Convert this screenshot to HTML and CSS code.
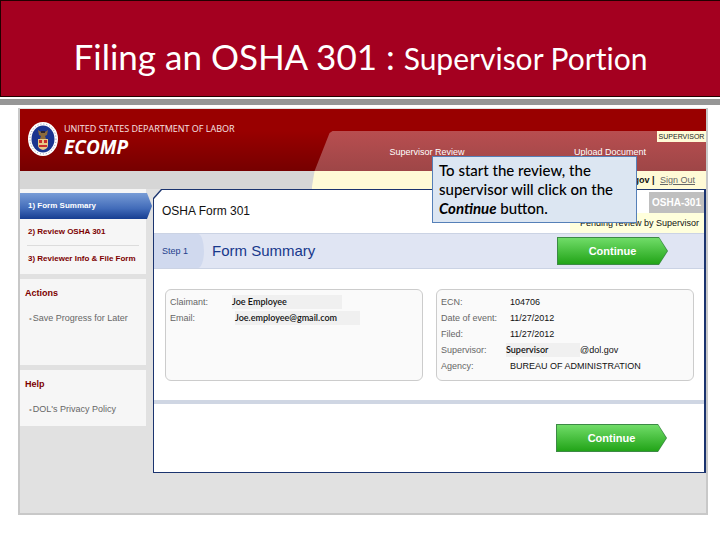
FILE: index.html
```
<!DOCTYPE html>
<html lang="en">
<head>
<meta charset="utf-8">
<title>Filing an OSHA 301: Supervisor Portion</title>
<link rel="stylesheet" href="styles.css">
</head>
<body>
<header class="banner">
  <h1>Filing an OSHA 301 : <small>Supervisor Portion</small></h1>
</header>
<main class="app">
  <div class="top">
    <div class="brand">
      <svg class="seal" viewBox="0 0 30 34" aria-hidden="true">
        <ellipse cx="15" cy="17" rx="15" ry="17" fill="#fff"/>
        <ellipse cx="15" cy="17" rx="13" ry="15" fill="none" stroke="#8793b5" stroke-width="1" stroke-dasharray="1 2"/>
        <ellipse cx="15" cy="17" rx="11.500" ry="13.500" fill="#19338f"/>
        <path d="M10 8l3 2 2-1 2 1 3-2-1 5-2 1 1 3h-6l1-3-2-1z" fill="#8a6a3c"/>
        <path d="M13 9h4v2h-4z" fill="#2a2430"/>
        <path d="M10 17h10v6q0 4-5 5-5-1-5-5z" fill="#e8c987"/>
        <path d="M11 18h3v3h-3zM16 18h3v3h-3zM11 23h8v2h-8z" fill="#c9302c"/>
      </svg>
      <div>
        <p class="department">UNITED STATES DEPARTMENT OF LABOR</p>
        <p class="product">ECOMP</p>
      </div>
    </div>
    <div class="tabs">
      <span class="role">SUPERVISOR</span>
      <nav class="tab-links">
        <a href="#">Supervisor Review</a>
        <a href="#">Upload Document</a>
      </nav>
      <p class="account"><b>.gov |</b> <a href="#">Sign Out</a></p>
    </div>
  </div>
  <div class="columns">
    <aside class="sidebar">
      <nav class="block steps">
        <a class="active" href="#">1) Form Summary</a>
        <a href="#">2) Review OSHA 301</a>
        <a href="#">3) Reviewer Info &amp; File Form</a>
      </nav>
      <section class="block actions">
        <h2>Actions</h2>
        <a href="#">Save Progress for Later</a>
      </section>
      <section class="block">
        <h2>Help</h2>
        <a href="#">DOL's Privacy Policy</a>
      </section>
    </aside>
    <div class="panel">
      <div class="sheet">
        <div class="form-head">
          <h2>OSHA Form 301</h2>
          <div class="status">
            <span class="code">OSHA-301</span>
            <span class="state">Pending review by Supervisor</span>
          </div>
        </div>
        <div class="step-bar">
          <span class="step">Step 1</span>
          <h3>Form Summary</h3>
          <button class="go" type="button"><span>Continue</span></button>
        </div>
        <div class="cards">
          <dl class="card claimant">
            <dt>Claimant:</dt><dd><span class="fill name">Joe Employee</span></dd>
            <dt>Email:</dt><dd><span class="fill mail">Joe.employee@gmail.com</span></dd>
          </dl>
          <dl class="card details">
            <dt>ECN:</dt><dd>104706</dd>
            <dt>Date of event:</dt><dd>11/27/2012</dd>
            <dt>Filed:</dt><dd>11/27/2012</dd>
            <dt>Supervisor:</dt><dd class="address"><span class="fill sup">Supervisor</span>@dol.gov</dd>
            <dt>Agency:</dt><dd>BUREAU OF ADMINISTRATION</dd>
          </dl>
        </div>
        <div class="foot">
          <button class="go" type="button"><span>Continue</span></button>
        </div>
      </div>
    </div>
  </div>
  <p class="callout">To start the review, the supervisor will click on the <em>Continue</em> button.</p>
</main>
</body>
</html>
```
FILE: styles.css
```
* { box-sizing: border-box; }
body {
  margin: 0;
  background: #fff;
  color: #111;
  font: 9px/16px "Liberation Sans", sans-serif;
}
h1, h2, h3, p, dl, dd { margin: 0; }
a { color: inherit; text-decoration: none; }

.banner {
  height: 97px;
  padding-top: 34px;
  border: 1px solid #200;
  border-right: 0;
  background: #a40020;
  color: #fff;
  text-align: center;
}
.banner h1 { font: 400 35px/42px Lato, sans-serif; font-variant-ligatures: none; }
.banner small { font-size: 30px; }

.app {
  position: relative;
  margin: 2px 12px 24px 18px;
  border: 2px solid #c8c8c8;
  border-top-width: 1px;
  background: #e1e1e1;
}
.app::before {
  content: "";
  display: block;
  height: 6px;
  margin: -1px -14px 4px -20px;
  background: #969696;
  box-shadow: 0 3px #fff;
}

.top {
  display: flex;
  justify-content: space-between;
  height: 80px;
  background: linear-gradient(#990000 0 22px, #760000 62px, #d6d6d6 62px);
}
.brand { display: flex; gap: 6px; padding: 13px 0 0 8px; }
.seal { width: 30px; height: 34px; }
.department { color: #f6e4e4; font: 9px/13px "Open Sans", sans-serif; }
.product { color: #fff; font: italic 700 19px/24px "Open Sans", sans-serif; }

.tabs {
  width: 57.500%;
  margin-top: 22px;
  background: linear-gradient(#b84e50, #9e4647 40px, #fffad6 40px);
  clip-path: polygon(21px 0, 100% 0, 100% 100%, 0 100%, 3px 40px, 18px 2px);
}
.role {
  display: block;
  width: 49px;
  margin-left: auto;
  background: #fffad6;
  color: #222;
  font-size: 7px;
  line-height: 11px;
  text-align: center;
}
.tab-links { display: flex; justify-content: space-between; padding: 2px 60px 0 78px; color: #fff; }
.account { padding: 12px 11px 0 0; text-align: right; }
.account a { margin-left: 3px; color: #666; text-decoration: underline; }

.columns { display: flex; align-items: flex-start; padding-bottom: 40px; }
.sidebar { flex: 0 0 133px; color: #666; }
.block { margin: 0 7px 5px 0; padding: 6px 5px 8px; background: #f6f6f6; }
.block h2 { color: #7c0000; font: 700 9px/16px "Liberation Sans", sans-serif; }
.block a { display: block; padding-left: 9px; line-height: 16px; }
.block h2 + a { margin-top: 9px; }
.block h2 + a::before { content: "•"; margin: 0 1px 0 -5px; color: #999; font-size: 8px; }
.actions { min-height: 86px; }
.steps { padding: 4px 0 3px; }
.steps a { margin: 0 7px; padding: 0 1px; color: #7c0000; font-size: 8px; font-weight: 700; line-height: 26px; white-space: nowrap; }
.steps a:last-child { border-top: 1px solid #dcdcdc; line-height: 25px; }
.steps a.active {
  margin: 0 -6px 0 0;
  padding-left: 8px;
  background: linear-gradient(#789cd6, #416bb9 60%, #163d91);
  color: #fff;
  clip-path: polygon(0 0, 127px 0, 100% 50%, 127px 100%, 0 100%);
}

.panel {
  flex: 1;
  padding: 1px 2px 1px 1px;
  background: #1b346f;
  clip-path: polygon(8px 0, 100% 0, 100% 100%, 0 100%, 0 9px);
}
.sheet { background: #fff; clip-path: polygon(8px 0, 100% 0, 100% 100%, 0 100%, 0 9px); }
.form-head { display: flex; justify-content: space-between; padding-left: 8px; }
.form-head h2 { font: 400 12px/43px "Liberation Sans", sans-serif; }
.status { display: flex; flex-direction: column; align-items: flex-end; padding-top: 2px; }
.code {
  width: 55px;
  background: #bfbfbf;
  color: #fff;
  font-size: 10px;
  font-weight: 700;
  line-height: 21px;
  text-align: center;
}
.state { padding: 0 5px 0 10px; background: #ffffdc; line-height: 20px; }

.step-bar {
  display: flex;
  align-items: center;
  height: 36px;
  padding-right: 36px;
  border: solid #cbd3e4;
  border-width: 1px 0;
  background: #e0e5f3;
}
.step {
  width: 50px;
  padding-left: 8px;
  border-radius: 0 6px 6px 0 / 0 17px 17px 0;
  background: #d0d9ee;
  color: #24408c;
  line-height: 34px;
}
.step-bar h3 { margin: 0 auto 0 8px; color: #17388c; font: 400 15px/20px "Liberation Sans", sans-serif; }

.go {
  position: relative;
  width: 111px;
  height: 28px;
  padding: 0;
  border: 0;
  background: #3c8a45;
  color: #fff;
  font: 700 11px/28px "Liberation Sans", sans-serif;
  clip-path: polygon(0 0, 102px 0, 100% 50%, 102px 100%, 0 100%);
}
.go::before {
  content: "";
  position: absolute;
  inset: 1px;
  background: linear-gradient(#70dc68, #22a418);
  clip-path: polygon(0 0, 101px 0, 100% 50%, 101px 100%, 0 100%);
}
.go span { position: relative; }

.cards { display: grid; grid-template-columns: 1fr 1fr; gap: 13px; padding: 20px 10px 19px 11px; }
.card {
  display: grid;
  align-content: start;
  min-height: 92px;
  padding: 4px;
  border: 1px solid #ccc;
  border-radius: 6px;
  background: #fafafa;
}
.claimant { grid-template-columns: 62px 1fr; }
.details { grid-template-columns: 69px 1fr; }
.card dt { color: #666; }
.fill { display: inline-block; background: #f0f0f0; font: 600 9px/14px Lato, sans-serif; }
.name { width: 110px; }
.mail { width: 125px; margin-left: 3px; }
.address { display: flex; align-items: center; margin-left: -4px; }
.sup { width: 74px; }
.foot { display: flex; justify-content: flex-end; padding: 20px 37px 20px 0; border-top: 4px solid #cfd6e3; }

.callout {
  position: absolute;
  top: 56px;
  right: 69px;
  width: 205px;
  padding: 4px 6px;
  border: 1px solid #5580b8;
  background: #dce6f2;
  color: #000;
  font: 500 15px/19px Lato, sans-serif;
}
.callout em { font-weight: 700; }
```
